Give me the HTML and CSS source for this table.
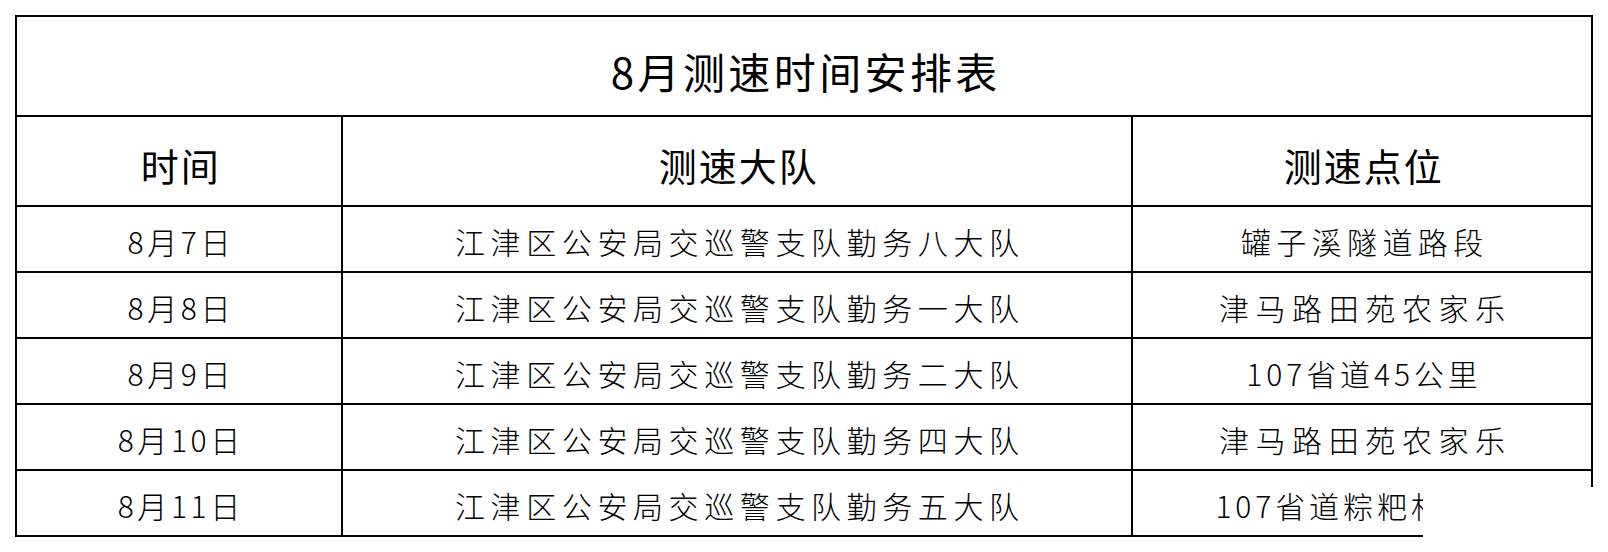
FILE: index.html
```html
<!DOCTYPE html>
<html lang="zh-CN">
<head>
<meta charset="utf-8">
<title>8月测速时间安排表</title>
<link rel="stylesheet" href="styles.css">
</head>
<body>
<div class="page">
  <table class="schedule">
    <colgroup>
      <col class="c-date">
      <col class="c-team">
      <col class="c-place">
    </colgroup>
    <tr class="title-row"><td colspan="3" class="title">8月测速时间安排表</td></tr>
    <tr class="head-row">
      <td class="head">时间</td>
      <td class="head">测速大队</td>
      <td class="head">测速点位</td>
    </tr>
    <tr class="data-row"><td>8月7日</td><td class="team">江津区公安局交巡警支队勤务八大队</td><td class="place sp-mid">罐子溪隧道路段</td></tr>
    <tr class="data-row"><td>8月8日</td><td class="team">江津区公安局交巡警支队勤务一大队</td><td class="place sp-wide">津马路田苑农家乐</td></tr>
    <tr class="data-row"><td>8月9日</td><td class="team">江津区公安局交巡警支队勤务二大队</td><td class="place sp-narrow">107省道45公里</td></tr>
    <tr class="data-row"><td>8月10日</td><td class="team">江津区公安局交巡警支队勤务四大队</td><td class="place sp-wide">津马路田苑农家乐</td></tr>
    <tr class="data-row"><td>8月11日</td><td class="team">江津区公安局交巡警支队勤务五大队</td><td class="place sp-last">107省道粽粑村路段</td></tr>
  </table>
  <div class="cover"></div>
</div>
</body>
</html>
```
FILE: styles.css
```css
html, body {
  margin: 0;
  padding: 0;
  background: #fff;
}
.page {
  position: relative;
  width: 1608px;
  height: 552px;
  padding: 15px 0 0 15px;
  box-sizing: border-box;
  overflow: hidden;
}
.schedule {
  border-collapse: collapse;
  table-layout: fixed;
  width: 1578px;
  font-family: "Noto Sans CJK SC", "Noto Sans", sans-serif;
  color: #000;
}
.c-date { width: 326px; }
.c-team { width: 790px; }
.c-place { width: 460px; }
.schedule td {
  border: 2px solid #000;
  padding: 0 0 0 3.6px;
  text-align: center;
  vertical-align: middle;
  white-space: nowrap;
  overflow: hidden;
}
.title-row { height: 100px; }
.title {
  font-size: 42px;
  font-weight: 400;
  letter-spacing: 3.4px;
  padding-top: 8px !important;
}
.head-row { height: 90px; }
.head {
  font-size: 38px;
  font-weight: 400;
  letter-spacing: 2px;
  padding-top: 6px !important;
}
.data-row { height: 66px; }
.data-row td {
  font-size: 30px;
  font-weight: 300;
  letter-spacing: 3.6px;
  padding-top: 4px;
}
.data-row td.team {
  letter-spacing: 5.6px;
  padding-left: 5.6px;
}
.data-row td.sp-mid { letter-spacing: 5.4px; padding-left: 5.4px; }
.data-row td.sp-wide { letter-spacing: 6.6px; padding-left: 6.6px; }
.data-row td.sp-narrow { letter-spacing: 3.9px; padding-left: 3.9px; }
.data-row td.sp-last { letter-spacing: 3.9px; padding-left: 3.9px; }
.cover {
  position: absolute;
  left: 1423px;
  top: 487px;
  width: 185px;
  height: 65px;
  background: #fff;
}
```
